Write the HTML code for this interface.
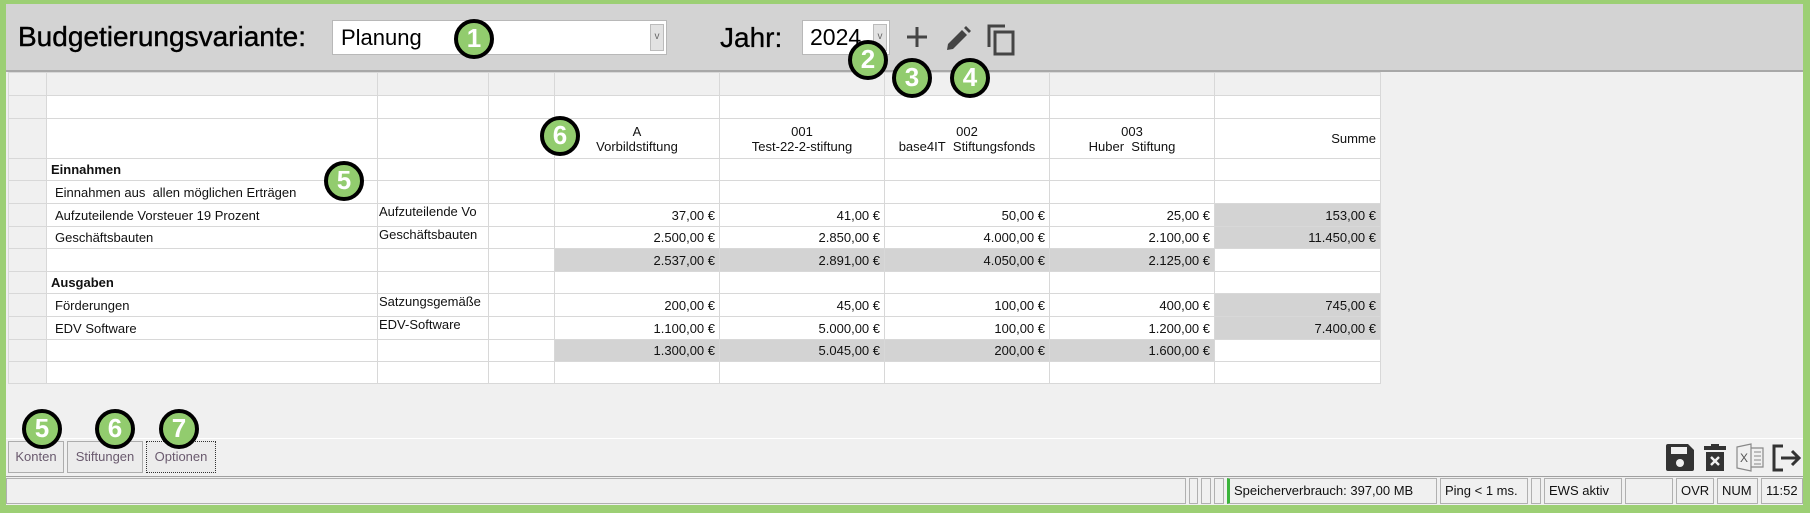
<!DOCTYPE html>
<html><head><meta charset="utf-8"><style>
*{margin:0;padding:0;box-sizing:border-box}
body{width:1810px;height:513px;overflow:hidden;background:#9ccf74;font-family:"Liberation Sans",Arial,sans-serif;position:relative}
#app{position:absolute;left:6px;top:4px;right:7px;bottom:8px;background:#f0f0f0}
.abs{position:absolute}
#tb{position:absolute;left:0;top:0;right:0;height:68px;background:#d3d3d3;border-bottom:2px solid #a8a8a8}
.combo{position:absolute;background:#fff;border:1px solid #b8b8b8;font-size:22px;padding-left:8px;line-height:33px;color:#000}
.dd{position:absolute;right:2px;top:3px;width:14px;bottom:3px;background:#e2e2e2;border:1px solid #bbb;font-size:10px;color:#666;text-align:center;line-height:24px}
table{position:absolute;left:2px;top:68px;border-collapse:collapse;table-layout:fixed;background:#fff}
td{border:1px solid #d8d8d8;font-size:13px;padding:0 4px;white-space:nowrap;overflow:hidden;color:#111}
td.rh{background:#f0f0f0}
tr.h td{background:#f0f0f0}
td.r{text-align:right}
td.g{background:#d3d3d3}
td.c{text-align:center;line-height:15px}
.n{position:absolute;width:40px;height:40px;border-radius:50%;background:#92cc6e;border:4.5px solid #000;color:#fff;font:bold 26px/31px "Liberation Sans",sans-serif;text-align:center}
.btn{position:absolute;top:437px;height:32px;border:1px solid #adadad;background:#ececec;font-size:13px;color:#6a5a6e;text-align:center;line-height:30px}
.sp{position:absolute;top:474px;height:26px;border:1px solid #b0b0b0;font-size:13px;line-height:24px;padding-left:4px;color:#111}
</style></head><body>
<div id="app">
<div id="tb">
<div class="abs" style="left:12px;top:17px;font-size:28px;color:#000;-webkit-text-stroke:0.4px #000">Budgetierungsvariante:</div>
<div class="combo" style="left:326px;top:16px;width:335px;height:35px">Planung<div class="dd">v</div></div>
<div class="abs" style="left:714px;top:18px;font-size:28px;color:#000;-webkit-text-stroke:0.3px #000">Jahr:</div>
<div class="combo" style="left:796px;top:16px;width:88px;height:35px;padding-left:7px;font-size:23px">2024<div class="dd">v</div></div>
<svg class="abs" style="left:900px;top:22px" width="22" height="22"><path d="M11 1V21M1 11H21" stroke="#444" stroke-width="3"/></svg>
<svg class="abs" style="left:938px;top:21px" width="28" height="28"><path d="M3 25L4 19L18 5L23 10L9 24Z" fill="#444"/><path d="M20 3L22 1L27 6L25 8Z" fill="#444"/></svg>
<svg class="abs" style="left:980px;top:19px" width="30" height="33"><path d="M3 24V3H19" fill="none" stroke="#444" stroke-width="3"/><rect x="9" y="9" width="18" height="22" fill="none" stroke="#444" stroke-width="3"/></svg>
</div>
<table>
<colgroup><col style="width:38px"><col style="width:331px"><col style="width:111px"><col style="width:66px"><col style="width:165px"><col style="width:165px"><col style="width:165px"><col style="width:165px"><col style="width:166px"></colgroup>
<tr class="h" style="height:23px"><td></td><td></td><td></td><td></td><td></td><td></td><td></td><td></td><td></td></tr>
<tr style="height:23px"><td class="rh"></td><td style="border:1px dotted #333"></td><td></td><td></td><td></td><td></td><td></td><td></td><td></td></tr>
<tr style="height:40px"><td class="rh"></td><td></td><td></td><td></td><td class="c">A<br>Vorbildstiftung</td><td class="c">001<br>Test-22-2-stiftung</td><td class="c">002<br>base4IT&nbsp; Stiftungsfonds</td><td class="c">003<br>Huber&nbsp; Stiftung</td><td class="r">Summe</td></tr>
<tr style="height:22px"><td class="rh"></td><td style="font-weight:bold">Einnahmen</td><td></td><td></td><td></td><td></td><td></td><td></td><td></td></tr>
<tr style="height:23px"><td class="rh"></td><td style="padding-left:8px">Einnahmen aus&nbsp; allen möglichen Erträgen</td><td></td><td></td><td></td><td></td><td></td><td></td><td></td></tr>
<tr style="height:23px"><td class="rh"></td><td style="padding-left:8px">Aufzuteilende Vorsteuer 19 Prozent</td><td style="padding-left:1px;vertical-align:top">Aufzuteilende Vo</td><td></td><td class="r">37,00 €</td><td class="r">41,00 €</td><td class="r">50,00 €</td><td class="r">25,00 €</td><td class="r g">153,00 €</td></tr>
<tr style="height:22px"><td class="rh"></td><td style="padding-left:8px">Geschäftsbauten</td><td style="padding-left:1px;vertical-align:top">Geschäftsbauten</td><td></td><td class="r">2.500,00 €</td><td class="r">2.850,00 €</td><td class="r">4.000,00 €</td><td class="r">2.100,00 €</td><td class="r g">11.450,00 €</td></tr>
<tr style="height:23px"><td class="rh"></td><td></td><td></td><td></td><td class="r g">2.537,00 €</td><td class="r g">2.891,00 €</td><td class="r g">4.050,00 €</td><td class="r g">2.125,00 €</td><td></td></tr>
<tr style="height:22px"><td class="rh"></td><td style="font-weight:bold">Ausgaben</td><td></td><td></td><td></td><td></td><td></td><td></td><td></td></tr>
<tr style="height:23px"><td class="rh"></td><td style="padding-left:8px">Förderungen</td><td style="padding-left:1px;vertical-align:top">Satzungsgemäße</td><td></td><td class="r">200,00 €</td><td class="r">45,00 €</td><td class="r">100,00 €</td><td class="r">400,00 €</td><td class="r g">745,00 €</td></tr>
<tr style="height:23px"><td class="rh"></td><td style="padding-left:8px">EDV Software</td><td style="padding-left:1px;vertical-align:top">EDV-Software</td><td></td><td class="r">1.100,00 €</td><td class="r">5.000,00 €</td><td class="r">100,00 €</td><td class="r">1.200,00 €</td><td class="r g">7.400,00 €</td></tr>
<tr style="height:22px"><td class="rh"></td><td></td><td></td><td></td><td class="r g">1.300,00 €</td><td class="r g">5.045,00 €</td><td class="r g">200,00 €</td><td class="r g">1.600,00 €</td><td></td></tr>
<tr style="height:22px"><td class="rh"></td><td></td><td></td><td></td><td></td><td></td><td></td><td></td><td></td></tr>
</table>
<div class="abs" style="left:0;right:0;top:434px;height:1px;background:#fff"></div>
<div class="btn" style="left:2px;width:56px">Konten</div>
<div class="btn" style="left:61px;width:76px">Stiftungen</div>
<div class="btn" style="left:140px;width:70px;border:1px dotted #333">Optionen</div>
<div class="abs" style="left:0;right:0;top:472px;height:1px;background:#a0a0a0"></div>
<svg class="abs" style="left:1660px;top:440px" width="28" height="27"><path d="M0 2Q0 0 2 0H22L28 6V25Q28 27 26 27H2Q0 27 0 25Z" fill="#333"/><rect x="5" y="3" width="16" height="7" fill="#f0f0f0"/><circle cx="14" cy="19" r="4" fill="#f0f0f0"/></svg>
<svg class="abs" style="left:1698px;top:440px" width="22" height="27"><rect x="0" y="2" width="22" height="4" fill="#333"/><rect x="7" y="0" width="8" height="3" fill="#333"/><path d="M2 8H20V27H2Z" fill="#333"/><path d="M7 13L15 21M15 13L7 21" stroke="#f0f0f0" stroke-width="2.4"/></svg>
<svg class="abs" style="left:1730px;top:439px" width="28" height="29"><path d="M1 4L15 1V28L1 25Z" fill="none" stroke="#888" stroke-width="1.2"/><path d="M15 5H27V24H15" fill="none" stroke="#888" stroke-width="1.2"/><text x="4" y="19" font-size="12" font-family="Liberation Sans" fill="#555">X</text><path d="M18 9H25M18 13H25M18 17H25M18 21H25" stroke="#888"/></svg>
<svg class="abs" style="left:1765px;top:440px" width="32" height="28"><path d="M12 2H3V26H12" fill="none" stroke="#333" stroke-width="3"/><path d="M10 14H28M21 7L28 14L21 21" fill="none" stroke="#333" stroke-width="3"/></svg>
<div class="sp" style="left:0;width:1180px"></div>
<div class="sp" style="left:1183px;width:9px"></div>
<div class="sp" style="left:1195px;width:10px"></div>
<div class="sp" style="left:1208px;width:10px"></div>
<div class="sp" style="left:1221px;width:210px;border-left:3px solid #3cb43c">Speicherverbrauch: 397,00 MB</div>
<div class="sp" style="left:1434px;width:88px">Ping &lt; 1 ms.</div>
<div class="sp" style="left:1525px;width:10px"></div>
<div class="sp" style="left:1538px;width:78px">EWS aktiv</div>
<div class="sp" style="left:1619px;width:48px"></div>
<div class="sp" style="left:1670px;width:38px">OVR</div>
<div class="sp" style="left:1711px;width:41px">NUM</div>
<div class="sp" style="left:1755px;width:42px">11:52</div>
</div>
<div class="n" style="left:454px;top:19px">1</div>
<div class="n" style="left:848px;top:40px">2</div>
<div class="n" style="left:892px;top:58px">3</div>
<div class="n" style="left:950px;top:58px">4</div>
<div class="n" style="left:324px;top:161px">5</div>
<div class="n" style="left:540px;top:116px">6</div>
<div class="n" style="left:22px;top:409px">5</div>
<div class="n" style="left:95px;top:409px">6</div>
<div class="n" style="left:159px;top:409px">7</div>
</body></html>
